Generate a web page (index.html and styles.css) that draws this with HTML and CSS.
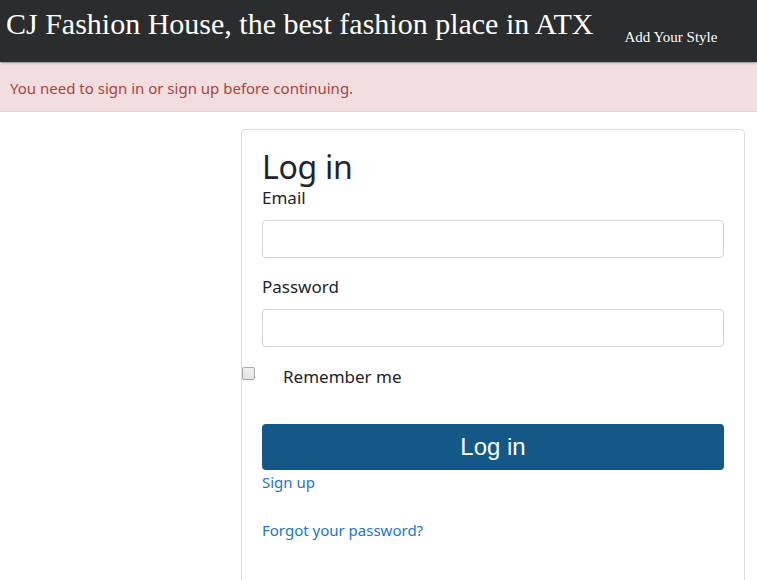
FILE: index.html
```html
<!DOCTYPE html>
<html>
<head>
<meta charset="utf-8">
<title>Log in</title>
<link rel="stylesheet" href="styles.css">
</head>
<body>
<header class="navbar">
  <span class="brand">CJ Fashion House, the best fashion place in ATX</span>
  <a class="nav-link" href="#">Add Your Style</a>
</header>
<div class="alert">You need to sign in or sign up before continuing.</div>
<main class="card">
  <h2 class="title">Log in</h2>
  <form class="form">
    <div class="field">
      <label for="email">Email</label>
      <input id="email" type="email" class="input">
    </div>
    <div class="field field-next">
      <label for="password">Password</label>
      <input id="password" type="password" class="input">
    </div>
    <div class="check">
      <input id="remember" type="checkbox" class="checkbox">
      <label for="remember">Remember me</label>
    </div>
    <button type="button" class="btn">Log in</button>
  </form>
  <a class="link" href="#">Sign up</a>
  <a class="link link-forgot" href="#">Forgot your password?</a>
</main>
</body>
</html>
```
FILE: styles.css
```css
html, body {
  margin: 0;
  padding: 0;
  background: #fff;
}
body {
  font-family: "Noto Sans", "Open Sans", sans-serif;
  color: #212529;
  height: 580px;
  overflow: hidden;
}
.navbar {
  background: #2b2c2e;
  height: 62px;
  display: flex;
  align-items: flex-start;
  box-shadow: 0 1px 2px rgba(0, 0, 0, 0.55);
  position: relative;
  z-index: 1;
}
.brand {
  font-family: "Liberation Serif", serif;
  font-size: 30px;
  line-height: 32px;
  color: #fff;
  padding: 8px 0 0 6px;
}
.nav-link {
  font-family: "Liberation Serif", serif;
  font-size: 15px;
  line-height: 18px;
  color: #fff;
  text-decoration: none;
  margin-left: 31px;
  padding-top: 28px;
}
.alert {
  margin-top: 2px;
  background: #f2dede;
  color: #a94442;
  border-bottom: 1px solid #ebccd1;
  font-size: 15px;
  line-height: 24px;
  padding: 12px 10px 11px;
}
.card {
  margin: 17px 0 0 241px;
  width: 462px;
  min-height: 500px;
  border: 1px solid #dcdcdc;
  border-radius: 4px;
  padding: 20px 20px 0;
}
.title {
  font-size: 32px;
  font-weight: 400;
  line-height: 34px;
  margin: 0 0 2px;
  letter-spacing: -0.3px;
}
.form {
  display: flex;
  flex-direction: column;
}
.field {
  display: flex;
  flex-direction: column;
  font-size: 17px;
}
.field label {
  line-height: 24px;
  margin-bottom: 10px;
}
.field-next {
  margin-top: 17px;
}
.input {
  height: 38px;
  box-sizing: border-box;
  border: 1px solid #d6d6d6;
  border-radius: 4px;
  margin: 0;
  padding: 6px 12px;
  font: inherit;
}
.check {
  display: flex;
  align-items: flex-start;
  margin-top: 18px;
  font-size: 17px;
  line-height: 24px;
}
.checkbox {
  appearance: none;
  -webkit-appearance: none;
  box-sizing: border-box;
  width: 13px;
  height: 13px;
  border: 1px solid #a8a8a8;
  border-radius: 2px;
  background: linear-gradient(#f0f0f0, #e2e2e2);
  margin: 2px 28px 0 -20px;
}
.btn {
  margin-top: 35px;
  height: 46px;
  border: 0;
  border-radius: 4px;
  background: #135887;
  color: #fff;
  font-family: "Liberation Sans", Arial, sans-serif;
  font-size: 24px;
  padding: 0;
}
.link {
  display: block;
  color: #1c74d4;
  text-decoration: none;
  font-size: 15px;
  line-height: 24px;
}
.link-forgot {
  margin-top: 24px;
}
```
